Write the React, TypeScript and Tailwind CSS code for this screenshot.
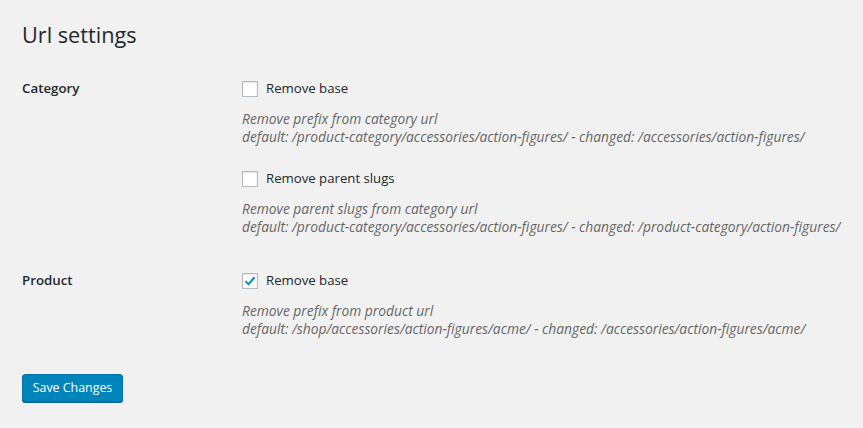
import React from 'react';

type Option = {
  label: string;
  checked: boolean;
  desc: string;
  example: string;
};

function Checkbox({ checked }: { checked: boolean }) {
  return (
    <span className="flex h-4 w-4 shrink-0 items-center justify-center border border-[#b4b9be] bg-white shadow-[inset_0_1px_2px_rgba(0,0,0,0.1)]">
      {checked && (
        <svg width="14" height="14" viewBox="0 0 14 14">
          <path d="M2.5 7.2 L5.6 10.2 L11.6 3.2" fill="none" stroke="#1e8cbe" strokeWidth="2.2" />
        </svg>
      )}
    </span>
  );
}

function OptionBlock({ opt, first }: { opt: Option; first: boolean }) {
  return (
    <div className={first ? '' : 'mt-[21px]'}>
      <label className="flex h-6 items-center gap-2 text-[13.2px] text-[#23282d]">
        <Checkbox checked={opt.checked} />
        <span>{opt.label}</span>
      </label>
      <p className="mt-[9px] text-[13.8px] italic leading-[18px] text-[#666]">
        {opt.desc}
        <br />
        {opt.example}
      </p>
    </div>
  );
}

function App() {
  const rows: { title: string; options: Option[] }[] = [
    {
      title: 'Category',
      options: [
        {
          label: 'Remove base',
          checked: false,
          desc: 'Remove prefix from category url',
          example: 'default: /product-category/accessories/action-figures/ - changed: /accessories/action-figures/',
        },
        {
          label: 'Remove parent slugs',
          checked: false,
          desc: 'Remove parent slugs from category url',
          example: 'default: /product-category/accessories/action-figures/ - changed: /product-category/action-figures/',
        },
      ],
    },
    {
      title: 'Product',
      options: [
        {
          label: 'Remove base',
          checked: true,
          desc: 'Remove prefix from product url',
          example: 'default: /shop/accessories/action-figures/acme/ - changed: /accessories/action-figures/acme/',
        },
      ],
    },
  ];

  return (
    <div className="min-h-screen bg-[#f1f1f1] px-[22px] pt-[20px] font-['Open_Sans',sans-serif] text-[#23282d]">
      <h1 className="text-[21.7px] font-normal leading-[29px]">Url settings</h1>

      <div className="mt-[28px] flex flex-col gap-[33px]">
        {rows.map((row) => (
          <div key={row.title} className="flex">
            <div className="flex h-6 w-[220px] shrink-0 items-center text-[13.3px] font-semibold">
              {row.title}
            </div>
            <div>
              {row.options.map((opt, i) => (
                <OptionBlock key={opt.label + i} opt={opt} first={i === 0} />
              ))}
            </div>
          </div>
        ))}
      </div>

      <button className="mt-[36px] h-[28px] w-[101px] rounded-[3px] border border-[#0073aa] bg-[#0085ba] pt-[1px] text-[12.4px] text-white shadow-[0_1px_0_#006799]">
        Save Changes
      </button>
    </div>
  );
}

export default App;
